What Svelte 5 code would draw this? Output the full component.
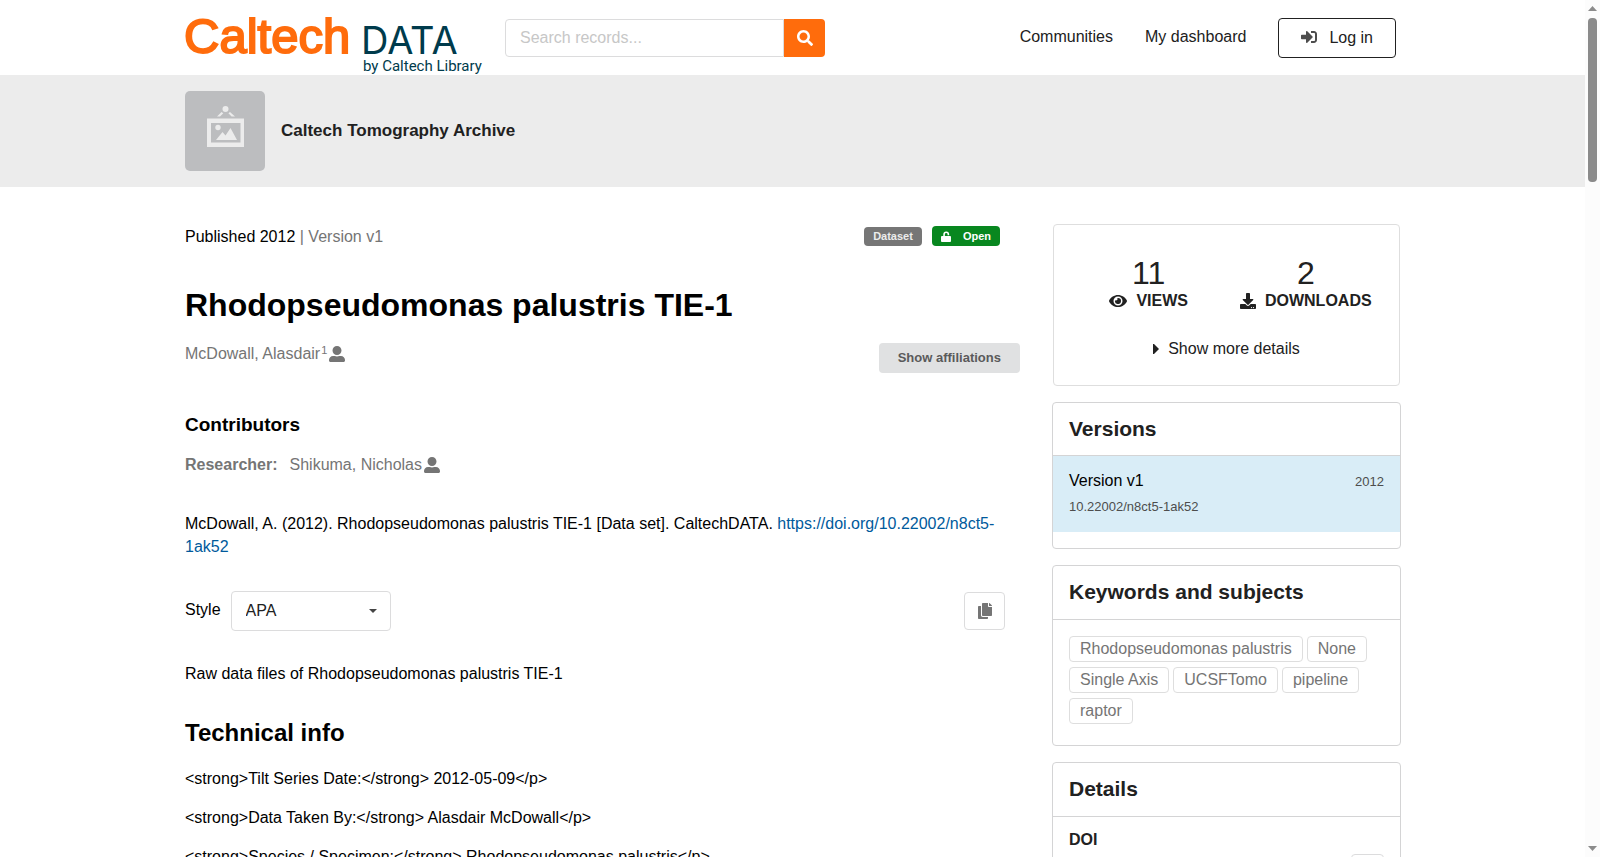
<script>
  const keywords = ['Rhodopseudomonas palustris', 'None', 'Single Axis', 'UCSFTomo', 'pipeline', 'raptor'];
  const technical = [
    '<strong>Tilt Series Date:</strong> 2012-05-09</p>',
    '<strong>Data Taken By:</strong> Alasdair McDowall</p>',
    '<strong>Species / Specimen:</strong> Rhodopseudomonas palustris</p>'
  ];
  const userPath =
    'M256 288c79.5 0 144-64.5 144-144S335.5 0 256 0 112 64.5 112 144s64.500 144 144 144zm128 32h-55.100c-22.200 10.200-46.900 16-72.900 16s-50.600-5.800-72.900-16H128C57.300 320 0 377.300 0 448v16c0 26.500 21.500 48 48 48h416c26.500 0 48-21.500 48-48v-16c0-70.700-57.300-128-128-128z';
  const copyPath =
    'M320 448v40c0 13.255-10.745 24-24 24H24c-13.255 0-24-10.745-24-24V120c0-13.255 10.745-24 24-24h72v296c0 30.879 25.121 56 56 56h168zm0-344V0H152c-13.255 0-24 10.745-24 24v368c0 13.255 10.745 24 24 24h272c13.255 0 24-10.745 24-24V128H344c-13.200 0-24-10.800-24-24zm120.971-31.029L375.029 7.029A24 24 0 0 0 358.059 0H352v96h96v-6.059a24 24 0 0 0-7.029-16.970z';
  let style = $state('APA');
</script>

{#snippet userIcon()}
  <svg class="user" viewBox="0 0 512 512" aria-hidden="true"><path d={userPath} /></svg>
{/snippet}

<div class="shell">
  <div class="page">
    <header>
      <div class="container bar">
        <a class="logo" href="#home" aria-label="CaltechDATA by Caltech Library">
          <svg width="304" height="75" viewBox="0 0 304 75">
            <text class="brand" x="-1" y="53">Caltech</text>
            <text class="data" x="176" y="54">DATA</text>
            <text class="byline" x="178" y="71">by Caltech Library</text>
          </svg>
        </a>
        <form class="search" role="search" onsubmit={(e) => e.preventDefault()}>
          <input type="search" placeholder="Search records..." aria-label="Search records" />
          <button aria-label="Search">
            <svg width="16" height="16" viewBox="0 0 512 512"><path d="M505 442.700L405.300 343c-4.500-4.500-10.600-7-17-7H372c27.600-35.300 44-79.700 44-128C416 93.100 322.900 0 208 0S0 93.100 0 208s93.100 208 208 208c48.300 0 92.700-16.400 128-44v16.300c0 6.400 2.500 12.500 7 17l99.700 99.700c9.400 9.400 24.600 9.400 33.900 0l28.300-28.300c9.400-9.400 9.400-24.600.1-34zM208 336c-70.700 0-128-57.200-128-128 0-70.700 57.200-128 128-128 70.700 0 128 57.200 128 128 0 70.700-57.200 128-128 128z" /></svg>
          </button>
        </form>
        <nav>
          <a class="link" href="#communities">Communities</a>
          <a class="link" href="#dashboard">My dashboard</a>
          <a class="login" href="#login">
            <svg width="16" height="16" viewBox="0 0 512 512" aria-hidden="true"><path d="M416 448h-84c-6.600 0-12-5.400-12-12v-40c0-6.600 5.400-12 12-12h84c17.700 0 32-14.300 32-32V160c0-17.700-14.300-32-32-32h-84c-6.600 0-12-5.400-12-12V76c0-6.600 5.400-12 12-12h84c53 0 96 43 96 96v192c0 53-43 96-96 96zm-47-209L201 71c-15-15-41-4.500-41 17v96H24c-13.300 0-24 10.700-24 24v96c0 13.300 10.700 24 24 24h136v96c0 21.500 26 32 41 17l168-168c9.300-9.400 9.300-24.600 0-34z" /></svg>
            Log in
          </a>
        </nav>
      </div>
    </header>

    <section class="community">
      <div class="container community-row">
        <svg class="thumb" viewBox="0 0 80 80" aria-hidden="true">
          <rect width="80" height="80" fill="#bcbdbf" />
          <g fill="#ececec">
            <circle cx="40.500" cy="18" r="3" />
            <path d="M36.500 21l1.800 1.200L35 25.500h-3zM45 21l-1.600 1.200 3.200 3.300H50z" />
            <path fill-rule="evenodd" d="M22 27.500h37v28.500H22zM26 32v19.500h29.500V32z" />
            <circle cx="33" cy="36.500" r="2.700" />
            <path d="M31 49l6.500-8 3 3.500L45.500 37 52 49z" />
          </g>
        </svg>
        <a href="#community">Caltech Tomography Archive</a>
      </div>
    </section>

    <div class="container columns">
      <main>
        <div class="status">
          <p>Published 2012 <span class="muted">| Version v1</span></p>
          <div class="labels">
            <span class="label">Dataset</span>
            <span class="label open">
              <svg width="10" height="11" viewBox="0 0 22 24" aria-hidden="true"><path d="M2 11h3V7.500a6.500 6.500 0 0 1 13 0V9h-3.500V7.500a3 3 0 0 0-6 0V11H20a2 2 0 0 1 2 2v9a2 2 0 0 1-2 2H2a2 2 0 0 1-2-2v-9a2 2 0 0 1 2-2z" /></svg>
              Open
            </span>
          </div>
        </div>

        <h1>Rhodopseudomonas palustris TIE-1</h1>

        <div class="creators">
          <p class="muted person">McDowall, Alasdair<sup>1</sup>{@render userIcon()}</p>
          <button class="affiliations">Show affiliations</button>
        </div>

        <h3>Contributors</h3>
        <p class="muted person"><strong>Researcher:</strong>Shikuma, Nicholas{@render userIcon()}</p>

        <p class="citation">McDowall, A. (2012). Rhodopseudomonas palustris TIE-1 [Data set]. CaltechDATA. <a href="#doi">https://doi.org/10.22002/n8ct5-1ak52</a></p>

        <div class="style-row">
          <label for="citation-style">Style</label>
          <div class="select">
            <select id="citation-style" bind:value={style}>
              <option>APA</option>
              <option>Chicago</option>
              <option>MLA</option>
            </select>
            <svg width="8" height="4" viewBox="0 0 8 4" aria-hidden="true"><path d="M0 0h8L4 4z" /></svg>
          </div>
          <button class="copy" aria-label="Copy citation">
            <svg width="14" height="16" viewBox="0 0 448 512"><path d={copyPath} /></svg>
          </button>
        </div>

        <p>Raw data files of Rhodopseudomonas palustris TIE-1</p>

        <h2>Technical info</h2>
        {#each technical as line}
          <p class="line">{line}</p>
        {/each}
      </main>

      <aside>
        <section class="stats">
          <div class="stat-row">
            <div class="stat">
              <span class="value">11</span>
              <span class="name">
                <svg width="18" height="16" viewBox="0 0 576 512" aria-hidden="true"><path d="M572.520 241.400C518.290 135.590 410.930 64 288 64S57.680 135.640 3.480 241.410a32.350 32.350 0 0 0 0 29.190C57.710 376.410 165.070 448 288 448s230.320-71.640 284.520-177.410a32.350 32.350 0 0 0 0-29.190zM288 400a144 144 0 1 1 144-144 143.930 143.930 0 0 1-144 144zm0-240a95.310 95.310 0 0 0-25.310 3.790 47.850 47.850 0 0 1-66.900 66.900A95.780 95.780 0 1 0 288 160z" /></svg>
                VIEWS
              </span>
            </div>
            <div class="stat">
              <span class="value">2</span>
              <span class="name">
                <svg width="16" height="16" viewBox="0 0 512 512" aria-hidden="true"><path d="M216 0h80c13.300 0 24 10.700 24 24v168h87.700c17.800 0 26.700 21.500 14.100 34.100L269.700 378.300c-7.500 7.500-19.800 7.500-27.300 0L90.100 226.100c-12.600-12.600-3.700-34.100 14.100-34.100H192V24c0-13.300 10.700-24 24-24zm296 376v112c0 13.300-10.700 24-24 24H24c-13.300 0-24-10.700-24-24V376c0-13.300 10.700-24 24-24h146.700l49 49c20.100 20.100 52.500 20.100 72.600 0l49-49H488c13.300 0 24 10.700 24 24zm-124 88c0-11-9-20-20-20s-20 9-20 20 9 20 20 20 20-9 20-20zm64 0c0-11-9-20-20-20s-20 9-20 20 9 20 20 20 20-9 20-20z" /></svg>
                DOWNLOADS
              </span>
            </div>
          </div>
          <button class="more">
            <svg width="6" height="10" viewBox="0 0 6 10" aria-hidden="true"><path d="M0 0l1 0 5 5-5 5H0z" /></svg>
            Show more details
          </button>
        </section>

        <section class="panel versions">
          <h2>Versions</h2>
          <div class="version">
            <div class="version-top"><span>Version v1</span><small>2012</small></div>
            <small>10.22002/n8ct5-1ak52</small>
          </div>
        </section>

        <section class="panel">
          <h2>Keywords and subjects</h2>
          <div class="keywords">
            {#each keywords as word}
              <a href="#search">{word}</a>
            {/each}
          </div>
        </section>

        <section class="panel">
          <h2>Details</h2>
          <div class="details">
            <strong>DOI</strong>
            <button class="copy-doi" aria-label="Copy DOI">
              <svg width="14" height="16" viewBox="0 0 448 512"><path d={copyPath} /></svg>
            </button>
          </div>
        </section>
      </aside>
    </div>
  </div>

  <div class="scrollbar" aria-hidden="true">
    <svg width="9" height="5" viewBox="0 0 9 5"><path d="M4.500 0L9 5H0z" /></svg>
    <div class="track"><div class="handle"></div></div>
    <svg width="9" height="5" viewBox="0 0 9 5"><path d="M0 0h9L4.500 5z" /></svg>
  </div>
</div>

<style>
  :global(body) {
    margin: 0;
    background: #fff;
  }
  .shell {
    display: grid;
    grid-template-columns: minmax(0, 1fr) 15px;
    height: 100vh;
    font: 16px/23px "Liberation Sans", Arial, sans-serif;
    color: #000;
  }
  .shell :is(p, h1, h2, h3) {
    margin: 0;
  }
  .shell a {
    text-decoration: none;
    color: inherit;
  }
  button,
  input,
  select {
    font: inherit;
    box-sizing: border-box;
    margin: 0;
  }
  button {
    cursor: pointer;
  }
  svg {
    display: block;
    fill: currentColor;
    flex: none;
  }
  .page {
    overflow-y: auto;
    scrollbar-width: none;
  }
  .container {
    max-width: 1216px;
    margin: 0 auto;
    padding-left: 1px;
  }
  .bar {
    display: flex;
    align-items: center;
    min-height: 75px;
    color: #212121;
  }
  .logo {
    margin-right: 16px;
  }
  .brand {
    font: 49px "Liberation Sans", Arial, sans-serif;
    fill: #ff6c0c;
    stroke: #ff6c0c;
    stroke-width: 2px;
  }
  .data {
    font: 38px Inter, sans-serif;
    fill: #003b4c;
  }
  .byline {
    font: 15px Roboto, sans-serif;
    fill: #003b4c;
  }
  .search {
    display: flex;
    width: 320px;
    height: 38px;
  }
  .search input {
    flex: 1;
    min-width: 0;
    padding: 0 14px;
    border: 1px solid #dcdcdd;
    border-radius: 4px 0 0 4px;
    background: #fff;
    appearance: none;
    outline: none;
  }
  .search input::placeholder {
    color: #c7c7c7;
  }
  .search button {
    display: grid;
    place-items: center;
    width: 41px;
    border: 0;
    border-radius: 0 4px 4px 0;
    background: #ff6c0c;
    color: #fff;
  }
  nav {
    display: flex;
    align-items: center;
    gap: 32px;
    margin: 0 5px 0 auto;
  }
  .link {
    padding-bottom: 2px;
  }
  .login {
    display: flex;
    align-items: center;
    gap: 12px;
    padding: 7px 22px 8px;
    border: 1px solid #212121;
    border-radius: 4px;
  }
  .login svg {
    color: #4d4d4d;
  }
  .community {
    background: #ececec;
  }
  .community-row {
    display: flex;
    align-items: center;
    gap: 16px;
    padding-top: 16px;
    padding-bottom: 16px;
    font-size: 17px;
    font-weight: bold;
    color: #212121;
  }
  .community-row a {
    padding-bottom: 2px;
  }
  .thumb {
    width: 80px;
    height: 80px;
    border-radius: 5px;
  }
  .columns {
    display: grid;
    grid-template-columns: minmax(0, 835fr) minmax(0, 349fr);
    gap: 32px;
    padding-top: 37px;
    padding-bottom: 37px;
  }
  .muted {
    color: #757575;
  }
  main {
    padding-top: 1px;
  }
  .status {
    display: flex;
    align-items: start;
    justify-content: space-between;
    padding-right: 20px;
  }
  .labels {
    display: flex;
    align-items: end;
    gap: 10px;
    padding-top: 1px;
    font-size: 11px;
    font-weight: bold;
    line-height: 19px;
  }
  .label {
    padding: 0 9px;
    border-radius: 4px;
    background: #767676;
    color: #ececec;
  }
  .open {
    display: flex;
    align-items: center;
    gap: 12px;
    line-height: 20px;
    background: #08871f;
    color: #fff;
  }
  .shell h1 {
    margin: 37px 0 16px;
    font-size: 32px;
    line-height: 41px;
  }
  .creators {
    display: flex;
    align-items: start;
    justify-content: space-between;
  }
  .person {
    display: flex;
    align-items: center;
  }
  .person strong {
    margin-right: 12px;
  }
  sup {
    margin-left: 1px;
    align-self: start;
    font-size: 11px;
    line-height: 16px;
  }
  .user {
    width: 16px;
    height: 16px;
    margin-left: 2px;
  }
  .affiliations {
    margin-top: 1px;
    padding: 0 19px;
    border: 0;
    border-radius: 4px;
    background: #e0e1e2;
    color: #5a5a5b;
    font-size: 13px;
    font-weight: bold;
    line-height: 30px;
  }
  .shell h3 {
    margin: 40px 0 17px;
    font-size: 19px;
    line-height: 23px;
  }
  .shell .citation {
    margin: 36px 0 33px;
  }
  .shell .citation a {
    color: #005a9c;
  }
  .style-row {
    display: flex;
    align-items: center;
    gap: 10px;
    margin-bottom: 31px;
    padding-right: 15px;
  }
  .style-row label {
    padding-bottom: 3px;
  }
  .select {
    display: grid;
    align-items: center;
    width: 160px;
    color: #212121;
  }
  .select select,
  .select svg {
    grid-area: 1 / 1;
  }
  .select svg {
    justify-self: end;
    margin-right: 14px;
    pointer-events: none;
    color: #444;
  }
  select {
    width: 100%;
    height: 40px;
    padding: 0 14px 2px;
    border: 1px solid #dcdcdd;
    border-radius: 4px;
    background: #fff;
    color: inherit;
    appearance: none;
  }
  .copy,
  .copy-doi {
    display: grid;
    place-items: center;
    height: 38px;
    padding: 0;
    border: 1px solid #dcdcdd;
    border-radius: 4px;
    background: #fff;
    color: #757575;
  }
  .copy {
    width: 41px;
    margin-left: auto;
  }
  .shell main h2 {
    margin: 32px 0 19px;
    font-size: 24px;
    line-height: 31px;
  }
  .shell .line {
    margin-bottom: 16px;
  }
  aside {
    display: grid;
    align-content: start;
    gap: 16px;
    color: #212121;
  }
  .stats {
    margin: 0 1px;
    padding: 32px 13px 25px;
    border: 1px solid #dedede;
    border-radius: 4px;
  }
  .stat-row {
    display: flex;
    justify-content: center;
    gap: 52px;
    padding-left: 28px;
  }
  .stat {
    display: grid;
    justify-items: center;
  }
  .value {
    font-size: 32px;
    line-height: 32px;
  }
  .name {
    display: flex;
    align-items: center;
    gap: 9px;
    font-weight: bold;
  }
  .more {
    display: flex;
    align-items: center;
    gap: 9px;
    margin: 25px auto 0;
    padding: 0;
    border: 0;
    background: none;
    color: inherit;
  }
  .panel {
    border: 1px solid #d4d4d5;
    border-radius: 4px;
  }
  .panel h2 {
    padding: 13px 16px 15px;
    border-bottom: 1px solid #d4d4d5;
    font-size: 21px;
    line-height: 25px;
  }
  .versions {
    padding-bottom: 16px;
  }
  .versions h2 {
    padding-bottom: 14px;
  }
  .version {
    padding: 13px 16px 14px;
    background: #d9edf7;
    color: #000;
  }
  .version-top {
    display: flex;
    justify-content: space-between;
    margin-bottom: 1px;
  }
  small {
    display: block;
    font-size: 13px;
    line-height: 23px;
    color: #4d4d4d;
  }
  .version-top small {
    line-height: 25px;
  }
  .keywords {
    display: flex;
    flex-wrap: wrap;
    gap: 5px 4px;
    padding: 16px 16px 21px;
  }
  .keywords a {
    padding: 0 10px;
    border: 1px solid #dedede;
    border-radius: 4px;
    line-height: 24px;
    color: #757575;
  }
  .details {
    display: grid;
    padding: 11px 16px;
  }
  .copy-doi {
    width: 33px;
    height: 32px;
    margin-top: 3px;
    justify-self: end;
  }
  .scrollbar {
    display: flex;
    flex-direction: column;
    align-items: center;
    padding: 6px 0;
    background: #fcfcfc;
    color: #8b8b8b;
  }
  .track {
    flex: 1;
    padding: 7px 0;
  }
  .handle {
    width: 9px;
    height: 20%;
    border-radius: 4px;
    background: #8b8b8b;
  }
</style>
